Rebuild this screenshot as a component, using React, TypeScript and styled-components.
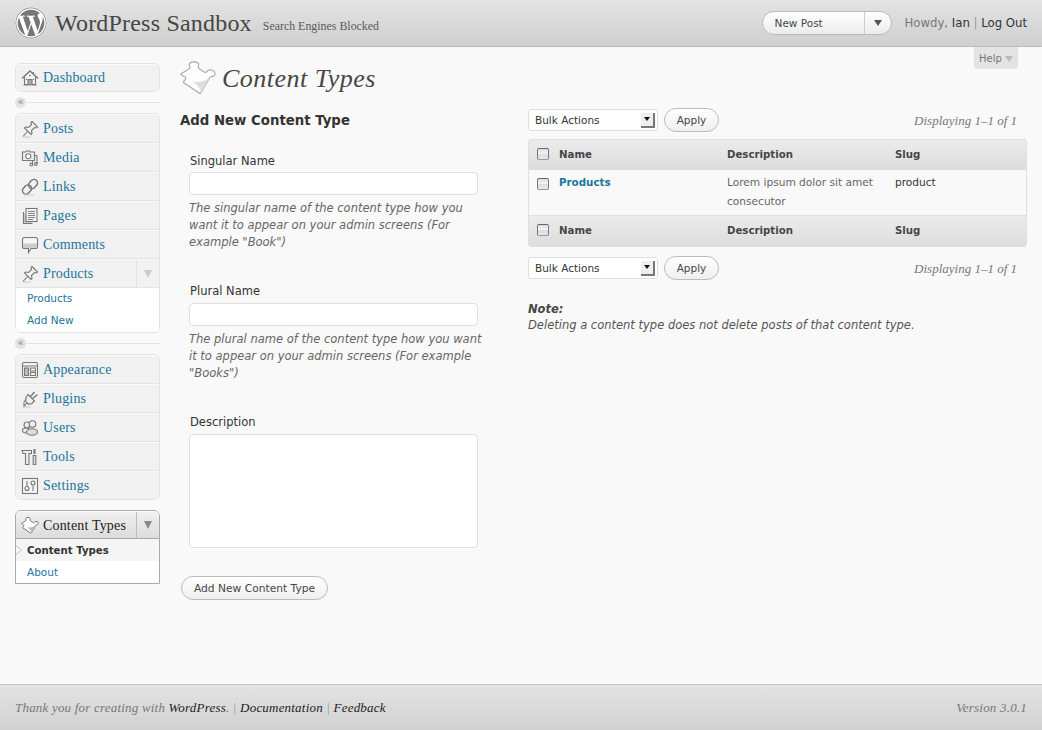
import React from 'react'
import styled, { createGlobalStyle } from 'styled-components'
import { FaWordpress } from 'react-icons/fa'

const SERIF = '"Liberation Serif", Georgia, serif'
const SANS = '"DejaVu Sans", "Open Sans", sans-serif'

const Global = createGlobalStyle`
  html, body { margin: 0; padding: 0; background: #f9f9f9; }
  body { font-family: ${SANS}; color: #333; }
  * { box-sizing: border-box; }
`

const Page = styled.div`
  position: relative;
  min-height: 730px;
  height: 100vh;
  display: flex;
  flex-direction: column;
`
const Header = styled.header`
  height: 47px;
  flex: none;
  display: flex;
  align-items: center;
  padding: 0 15px;
  background: linear-gradient(#e3e3e3, #cfcfcf);
  border-bottom: 1px solid #bcbcbc;
`
const Logo = styled.div`
  width: 32px;
  height: 32px;
  border-radius: 50%;
  background: #fff;
  color: #777;
  display: flex;
  margin-right: 8px;
  svg { width: 32px; height: 32px; }
`
const SiteName = styled.h1`
  margin: 0;
  font: 400 24px ${SERIF};
  color: #464646;
  letter-spacing: 0.2px;
`
const Blocked = styled.span`
  margin: 6px 0 0 11px;
  font: 400 11.9px ${SERIF};
  color: #5a5a5a;
`
const HeaderRight = styled.div`
  margin-left: auto;
  display: flex;
  align-items: center;
`
const Favorites = styled.div`
  width: 130px;
  height: 24px;
  border: 1px solid #bbb;
  border-radius: 12px;
  background: linear-gradient(#fff, #ececec);
  display: flex;
  align-items: center;
  font-size: 10.5px;
  color: #464646;
  margin-right: 13px;
`
const FavLabel = styled.span`
  flex: 1;
  padding-left: 12px;
`
const FavArrow = styled.span`
  width: 27px;
  height: 100%;
  border-left: 1px solid #ccc;
  display: flex;
  align-items: center;
  justify-content: center;
  &::after {
    content: '';
    border: 4px solid transparent;
    border-top: 6px solid #555;
    border-bottom: 0;
  }
`
const Howdy = styled.div`
  font-size: 11.7px;
  color: #777;
  b { font-weight: 400; color: #333; }
  i { font-style: normal; color: #999; }
`
const HelpTab = styled.div`
  position: absolute;
  top: 47px;
  right: 24px;
  width: 44px;
  height: 22px;
  background: #e3e3e3;
  border-radius: 0 0 3px 3px;
  color: #777;
  font-size: 10px;
  display: flex;
  align-items: center;
  justify-content: center;
  gap: 3px;
  &::after {
    content: '';
    border: 4px solid transparent;
    border-top: 6px solid #bbb;
    border-bottom: 0;
    margin-top: 2px;
  }
`
const Body = styled.div`
  flex: 1;
  display: flex;
  padding-left: 15px;
`
const Sidebar = styled.nav`
  width: 145px;
  flex: none;
  padding-top: 16px;
`
const MenuGroup = styled.div`
  border: 1px solid #e3e3e3;
  border-radius: 6px;
  overflow: hidden;
`
const MenuRow = styled.div<{ $current?: boolean; $short?: boolean }>`
  height: 29px;
  display: flex;
  align-items: center;
  background: ${(p) => (p.$current ? 'linear-gradient(#f0f0f0, #dcdcdc)' : '#f1f1f1')};
  border-bottom: 1px solid #e3e3e3;
  border-top: 1px solid #fafafa;
  padding-left: 5px;
  font: 400 14px ${SERIF};
  letter-spacing: 0.17px;
  color: ${(p) => (p.$current ? '#222' : '#21759b')};
  &:last-child {
    border-bottom: 0;
    height: ${(p) => (p.$short ? 27 : 28)}px;
  }
  svg { width: 18px; height: 18px; flex: none; margin-right: 4px; }
`
const MenuArrow = styled.span<{ $dark?: boolean }>`
  margin-left: auto;
  width: 23px;
  height: 100%;
  border-left: 1px solid ${(p) => (p.$dark ? '#bbb' : '#e3e3e3')};
  display: flex;
  align-items: center;
  justify-content: center;
  &::after {
    content: '';
    border: 4.5px solid transparent;
    border-top: 8px solid ${(p) => (p.$dark ? '#888' : '#ccc')};
    border-bottom: 0;
  }
`
const SubList = styled.div`
  background: #fff;
`
const SubItem = styled.div<{ $current?: boolean }>`
  position: relative;
  height: 22px;
  padding-left: 11px;
  display: flex;
  align-items: center;
  font-size: ${(p) => (p.$current ? '10.2px' : '10.5px')};
  font-weight: ${(p) => (p.$current ? 700 : 400)};
  color: ${(p) => (p.$current ? '#333' : '#21759b')};
  background: ${(p) => (p.$current ? '#f5f5f5' : '#fff')};
`
const PlainSubItem = styled(SubItem)`
  padding-bottom: 2px;
`
const CurrentMark = styled.span`
  position: absolute;
  left: 0;
  top: 6px;
  border: 5px solid transparent;
  border-left: 6px solid #bbb;
  border-right: 0;
  &::after {
    content: '';
    position: absolute;
    left: -6px;
    top: -4px;
    border: 4px solid transparent;
    border-left: 5px solid #f9f9f9;
    border-right: 0;
  }
`
const Separator = styled.div`
  height: 21px;
  display: flex;
  align-items: center;
  &::after {
    content: '';
    flex: 1;
    height: 1px;
    background: #e3e3e3;
  }
`
const Collapse = styled.span`
  width: 11px;
  height: 11px;
  border-radius: 50%;
  background: #e3e3e3;
  color: #888;
  font: 10px/10px ${SANS};
  text-align: center;
`
const CurrentGroup = styled(MenuGroup)`
  margin-top: 10px;
  border: 1px solid #aaa;
  border-radius: 6px 6px 0 0;
  overflow: visible;
  ${MenuRow} {
    height: 28px;
    padding-top: 2px;
    border-radius: 5px 5px 0 0;
    border-bottom: 1px solid #aaa;
  }
  ${MenuArrow} { height: 26px; margin-top: -2px; }
`
const Main = styled.main`
  flex: 1;
  padding: 0 15px 0 20px;
  min-width: 0;
`
const TitleRow = styled.div`
  height: 47px;
  margin-top: 8px;
  display: flex;
  align-items: center;
  gap: 6px;
  svg { width: 36px; height: 36px; flex: none; }
`
const PageTitle = styled.h2`
  margin: 0;
  font: italic 400 26px ${SERIF};
  letter-spacing: 0.48px;
  color: #464646;
`
const Columns = styled.div`
  display: flex;
  margin-top: 2px;
`
const FormColumn = styled.section`
  width: 348px;
  flex: none;
`
const FormHeading = styled.h3`
  margin: 0;
  padding-top: 7px;
  height: 49px;
  font-size: 13.3px;
  line-height: 20px;
  font-weight: 700;
  color: #333;
`
const Field = styled.div<{ $gap: number }>`
  padding-left: 9px;
  margin-bottom: ${(p) => p.$gap}px;
  width: 307px;
`
const Label = styled.label<{ $tall?: boolean }>`
  display: block;
  padding-left: 1px;
  height: ${(p) => (p.$tall ? 20 : 19)}px;
  font-size: 11.5px;
  line-height: 17px;
  color: #333;
`
const TextInput = styled.input`
  display: block;
  width: 289px;
  height: 23px;
  margin: 0;
  border: 1px solid #dfdfdf;
  border-radius: 4px;
  background: #fff;
  outline: none;
`
const TextArea = styled.textarea`
  display: block;
  width: 289px;
  height: 114px;
  margin: 0;
  border: 1px solid #dfdfdf;
  border-radius: 4px;
  background: #fff;
  resize: none;
  outline: none;
`
const Hint = styled.p`
  margin: 5px 0 0;
  font-size: 11.5px;
  font-style: italic;
  line-height: 17px;
  color: #666;
`
const PillButton = styled.button<{ $wide?: boolean }>`
  height: 24px;
  width: ${(p) => (p.$wide ? '147px' : '55px')};
  padding: 0;
  border: 1px solid #bbb;
  border-radius: 12px;
  background: linear-gradient(#fff, #efefef);
  font: 400 ${(p) => (p.$wide ? '10.7px' : '10.5px')} ${SANS};
  color: #464646;
`
const SubmitRow = styled.div`
  margin: 28px 0 0 1px;
`
const ListColumn = styled.section`
  flex: 1;
  min-width: 0;
`
const TableNav = styled.div<{ $bottom?: boolean }>`
  display: flex;
  align-items: center;
  height: 24px;
  margin: ${(p) => (p.$bottom ? '9px 0 0' : '4px 0 7px')};
`
const BulkSelect = styled.div`
  width: 130px;
  height: 22px;
  margin-right: 6px;
  padding: 0 2px 0 6px;
  border: 1px solid #dfdfdf;
  border-radius: 3px;
  background: #fff;
  display: flex;
  align-items: center;
  justify-content: space-between;
  font-size: 10.5px;
  color: #333;
`
const SelectArrow = styled.span`
  width: 14px;
  height: 15px;
  background: #eee;
  border: 1px solid #777;
  border-width: 0 2px 2px 0;
  display: flex;
  align-items: center;
  justify-content: center;
  &::after {
    content: '';
    border: 3px solid transparent;
    border-top: 4px solid #111;
    border-bottom: 0;
  }
`
const Displaying = styled.span`
  margin-left: auto;
  padding: 2px 10px 0 0;
  font: italic 400 13px ${SERIF};
  color: #777;
`
const Table = styled.table`
  width: 499px;
  border-collapse: separate;
  border-spacing: 0;
  table-layout: fixed;
  font-size: 10.6px;
`
const HeadCell = styled.th<{ $w?: number; $foot?: boolean }>`
  ${(p) => (p.$w ? `width: ${p.$w}px;` : '')}
  height: ${(p) => (p.$foot ? 32 : 31)}px;
  padding: 0 0 ${(p) => (p.$foot ? 3 : 2)}px 7px;
  text-align: left;
  font-size: 10.2px;
  font-weight: 700;
  color: #464646;
  background: linear-gradient(#ececec, #dcdcdc);
  border-top: 1px solid #dfdfdf;
  &:first-child {
    padding-left: 8px;
    border-left: 1px solid #dfdfdf;
    border-radius: ${(p) => (p.$foot ? '0 0 0 4px' : '4px 0 0 0')};
  }
  &:last-child {
    border-right: 1px solid #dfdfdf;
    border-radius: ${(p) => (p.$foot ? '0 0 4px 0' : '0 4px 0 0')};
  }
`
const Cell = styled.td<{ $dark?: boolean }>`
  height: 45px;
  padding: 3px 7px 3px 7px;
  vertical-align: top;
  line-height: 19px;
  color: ${(p) => (p.$dark ? '#333' : '#666')};
  &:first-child { padding-left: 8px; border-left: 1px solid #dfdfdf; }
  &:last-child { border-right: 1px solid #dfdfdf; }
`
const ProductLink = styled.a`
  font-size: 10.3px;
  font-weight: 700;
  color: #21759b;
`
const Check = styled.input.attrs({ type: 'checkbox' })`
  appearance: none;
  display: block;
  width: 12px;
  height: 12px;
  margin: 0;
  border: 1px solid #777;
  border-top-color: #666;
  border-bottom-color: #999;
  border-radius: 2px;
  background: linear-gradient(#ddd, #f5f5f5 50%, #ddd 55%, #e8e8e8);
`
const CellCheck = styled(Check)`
  margin-top: 5px;
`
const Note = styled.div`
  margin-top: 21px;
  font-size: 11.5px;
  font-style: italic;
  line-height: 16px;
  color: #555;
  b { display: block; color: #464646; }
`
const Footer = styled.footer`
  height: 46px;
  flex: none;
  padding: 0 15px;
  display: flex;
  align-items: center;
  justify-content: space-between;
  background: linear-gradient(#e3e3e3, #d1d1d1);
  border-top: 1px solid #c4c4c4;
  font: italic 400 13px ${SERIF};
  letter-spacing: 0.2px;
  color: #777;
  b { font-weight: 400; color: #222; }
  i { color: #999; }
`

const stroke = { fill: 'none', stroke: '#777', strokeWidth: 1.1 }

const HomeIcon = () => (
  <svg viewBox="0 0 18 18" {...stroke}>
    <path d="M1 9.500 9 2l8 7.500" strokeWidth="1.400" />
    <path d="M3.500 8v7.500h11V8M12.500 3v3" />
    <path d="M7 15.500v-5h4v5" fill="#aaa" />
    <path d="M2 16.500h14" stroke="#bbb" />
    <path d="M4.800 10.500h1.200M12 10.500h1.200M8 6.500h2" />
  </svg>
)
const PinIcon = () => (
  <svg viewBox="0 0 18 18" {...stroke}>
    <path
      d="M11 1.500 16.500 7l-1 1-2-.500-3 3 .5 3-1 1L3.500 8l1-1 3 .500 3-3-.5-2z"
      fill="#f2f2f2"
    />
    <path d="M6.500 11.500 2 16.500" />
    <path d="M2 17h8" stroke="#ccc" />
  </svg>
)
const MediaIcon = () => (
  <svg viewBox="0 0 18 18" {...stroke}>
    <path d="M1.500 3h3l.8-1h3l.8 1h4.400v8.500H1.500z" fill="#eee" />
    <circle cx="7.300" cy="7.200" r="2.500" fill="#fff" />
    <path d="M11.500 15.500V11.500M16 15V6.500M13 6.500h3" />
    <circle cx="10.300" cy="15.500" r="1.400" />
    <circle cx="14.800" cy="15" r="1.400" />
  </svg>
)
const LinkIcon = () => (
  <svg viewBox="0 0 18 18" {...stroke} strokeWidth={1.500}>
    <rect x="8.500" y="1" width="7" height="10" rx="3.500" transform="rotate(42 12 6)" />
    <rect x="2.500" y="6.500" width="7" height="10" rx="3.500" transform="rotate(42 6 11.500)" />
    <path d="M3 17h10" stroke="#ccc" strokeWidth="1" />
  </svg>
)
const PagesIcon = () => (
  <svg viewBox="0 0 18 18" {...stroke}>
    <path d="M2.500 5v11.500h9" fill="#ccc" />
    <rect x="5" y="1.500" width="11" height="13" fill="#f5f5f5" />
    <path d="M7 4.500h7M7 6.500h7M7 8.500h7M7 10.500h7M7 12.500h5" strokeWidth="0.900" />
  </svg>
)
const CommentIcon = () => (
  <svg viewBox="0 0 18 18" {...stroke}>
    <path
      d="M3.500 1.500h11a2 2 0 0 1 2 2v7a2 2 0 0 1-2 2H10l-2.500 4V12.500H3.500a2 2 0 0 1-2-2v-7a2 2 0 0 1 2-2z"
      fill="#f4f4f4"
    />
    <path d="M2 7.500h14v3a1.500 1.500 0 0 1-1.500 1.500h-11A1.500 1.500 0 0 1 2 10.500z" fill="#ccc" stroke="none" />
  </svg>
)
const AppearanceIcon = () => (
  <svg viewBox="0 0 18 18" {...stroke}>
    <rect x="1.500" y="1.500" width="15" height="15" rx="1.500" fill="#f4f4f4" />
    <path d="M1.500 5h15" />
    <rect x="3.500" y="7" width="4" height="7.500" fill="#bbb" />
    <path d="M9.500 7h5v3h-5zM9.500 11.500h5v3h-5z" />
  </svg>
)
const PluginIcon = () => (
  <svg viewBox="0 0 18 18" {...stroke}>
    <path d="M7 4.500 13.500 11l-2.500 2.500c-1.800 1-3.800.5-5-.5S4.500 9.500 5 7.500z" fill="#eee" />
    <path d="M9.500 6.500l4-4.500M11.500 8.500l5-4" strokeWidth="1.400" />
    <path d="M6 13l-3 3.500 0-4.500L5 9.500" />
    <path d="M2 17h8" stroke="#ccc" />
  </svg>
)
const UsersIcon = () => (
  <svg viewBox="0 0 18 18" {...stroke}>
    <circle cx="6" cy="6" r="3" fill="#eee" />
    <circle cx="11.500" cy="5" r="3.300" fill="#eee" />
    <ellipse cx="5" cy="11.500" rx="3.500" ry="2.500" fill="#eee" />
    <ellipse cx="11" cy="13" rx="5.500" ry="3.300" fill="#ddd" />
  </svg>
)
const ToolsIcon = () => (
  <svg viewBox="0 0 18 18" {...stroke}>
    <path d="M1 2.500h9.500v3H8v11H4.500v-11H2z" fill="#eee" />
    <path d="M13.500 1v5" strokeWidth="2" />
    <path d="M12.200 7.500h2.600v9h-2.600z" fill="#ddd" />
  </svg>
)
const SettingsIcon = () => (
  <svg viewBox="0 0 18 18" {...stroke}>
    <rect x="1.500" y="1.500" width="15" height="15" fill="#f4f4f4" />
    <path d="M6 4v5M12 9v5" />
    <circle cx="6" cy="11.500" r="2" />
    <circle cx="12" cy="6" r="2" />
  </svg>
)
const PuzzleIcon = ({ shade = '#ddd', line = '#aaa', width = 1.2 }: { shade?: string; line?: string; width?: number }) => (
  <svg viewBox="0 0 36 36" fill="none" stroke={line} strokeWidth={width}>
    <path
      d="M1.500 12.500 8 8.500C10 8 10.500 6.500 9.500 5 8.500 2.500 11 .8 14 .8s5.500 1.700 4.500 3.700C18 6 18 7 19.500 8L25 11.500c1.500.5 1.500-1 3-2 2.500-1.500 6.500 0 7 2.500.5 2.500-2.500 3.500-3.500 3.500s-1.500.5-2 1.500L21 31.500c-.5 1-1.500 1-2 .5L3.500 21.500c-.5-.5.5-1.500 1.500-2.500 1.500-2 .5-3.500-1.500-4s-3-1.500-2-2.500z"
      fill="#fdfdfd"
    />
    <path d="M29.500 17 21 31.500C20 26 15 20.500 9 20c7 2 15 1 20.500-3z" fill={shade} stroke="none" />
  </svg>
)

const BottomGroup = [
  { label: 'Appearance', icon: <AppearanceIcon /> },
  { label: 'Plugins', icon: <PluginIcon /> },
  { label: 'Users', icon: <UsersIcon /> },
  { label: 'Tools', icon: <ToolsIcon /> },
  { label: 'Settings', icon: <SettingsIcon /> },
]
const TopGroup = [
  { label: 'Posts', icon: <PinIcon /> },
  { label: 'Media', icon: <MediaIcon /> },
  { label: 'Links', icon: <LinkIcon /> },
  { label: 'Pages', icon: <PagesIcon /> },
  { label: 'Comments', icon: <CommentIcon /> },
]

function ListNav({ bottom }: { bottom?: boolean }) {
  return (
    <TableNav $bottom={bottom}>
      <BulkSelect>
        Bulk Actions
        <SelectArrow />
      </BulkSelect>
      <PillButton>Apply</PillButton>
      <Displaying>Displaying 1–1 of 1</Displaying>
    </TableNav>
  )
}

export default function App() {
  return (
    <Page>
      <Global />
      <Header>
        <Logo>
          <FaWordpress />
        </Logo>
        <SiteName>WordPress Sandbox</SiteName>
        <Blocked>Search Engines Blocked</Blocked>
        <HeaderRight>
          <Favorites>
            <FavLabel>New Post</FavLabel>
            <FavArrow />
          </Favorites>
          <Howdy>
            Howdy, <b>Ian</b> <i>|</i> <b>Log Out</b>
          </Howdy>
        </HeaderRight>
      </Header>
      <HelpTab>Help</HelpTab>
      <Body>
        <Sidebar>
          <MenuGroup>
            <MenuRow $short>
              <HomeIcon />
              Dashboard
            </MenuRow>
          </MenuGroup>
          <Separator>
            <Collapse>«</Collapse>
          </Separator>
          <MenuGroup>
            {TopGroup.map((item) => (
              <MenuRow key={item.label}>
                {item.icon}
                {item.label}
              </MenuRow>
            ))}
            <MenuRow>
              <PinIcon />
              Products
              <MenuArrow />
            </MenuRow>
            <SubList>
              <PlainSubItem>Products</PlainSubItem>
              <PlainSubItem>Add New</PlainSubItem>
            </SubList>
          </MenuGroup>
          <Separator>
            <Collapse>«</Collapse>
          </Separator>
          <MenuGroup>
            {BottomGroup.map((item) => (
              <MenuRow key={item.label}>
                {item.icon}
                {item.label}
              </MenuRow>
            ))}
          </MenuGroup>
          <CurrentGroup>
            <MenuRow $current>
              <PuzzleIcon shade="#bbb" line="#777" width={2} />
              Content Types
              <MenuArrow $dark />
            </MenuRow>
            <SubList>
              <SubItem $current>
                <CurrentMark />
                Content Types
              </SubItem>
              <SubItem>About</SubItem>
            </SubList>
          </CurrentGroup>
        </Sidebar>
        <Main>
          <TitleRow>
            <PuzzleIcon />
            <PageTitle>Content Types</PageTitle>
          </TitleRow>
          <Columns>
            <FormColumn>
              <FormHeading>Add New Content Type</FormHeading>
              <Field $gap={32}>
                <Label>Singular Name</Label>
                <TextInput />
                <Hint>The singular name of the content type how you want it to appear on your admin screens (For example "Book")</Hint>
              </Field>
              <Field $gap={32}>
                <Label $tall>Plural Name</Label>
                <TextInput />
                <Hint>The plural name of the content type how you want it to appear on your admin screens (For example "Books")</Hint>
              </Field>
              <Field $gap={0}>
                <Label $tall>Description</Label>
                <TextArea />
              </Field>
              <SubmitRow>
                <PillButton $wide>Add New Content Type</PillButton>
              </SubmitRow>
            </FormColumn>
            <ListColumn>
              <ListNav />
              <Table>
                <thead>
                  <tr>
                    <HeadCell $w={24}>
                      <Check />
                    </HeadCell>
                    <HeadCell $w={168}>Name</HeadCell>
                    <HeadCell $w={168}>Description</HeadCell>
                    <HeadCell>Slug</HeadCell>
                  </tr>
                </thead>
                <tbody>
                  <tr>
                    <Cell>
                      <CellCheck />
                    </Cell>
                    <Cell>
                      <ProductLink>Products</ProductLink>
                    </Cell>
                    <Cell>Lorem ipsum dolor sit amet consecutor</Cell>
                    <Cell $dark>product</Cell>
                  </tr>
                </tbody>
                <tfoot>
                  <tr>
                    <HeadCell $foot>
                      <Check />
                    </HeadCell>
                    <HeadCell $foot>Name</HeadCell>
                    <HeadCell $foot>Description</HeadCell>
                    <HeadCell $foot>Slug</HeadCell>
                  </tr>
                </tfoot>
              </Table>
              <ListNav bottom />
              <Note>
                <b>Note:</b>
                Deleting a content type does not delete posts of that content type.
              </Note>
            </ListColumn>
          </Columns>
        </Main>
      </Body>
      <Footer>
        <span>
          Thank you for creating with <b>WordPress</b>. <i>|</i> <b>Documentation</b> <i>|</i> <b>Feedback</b>
        </span>
        <span>Version 3.0.1</span>
      </Footer>
    </Page>
  )
}
